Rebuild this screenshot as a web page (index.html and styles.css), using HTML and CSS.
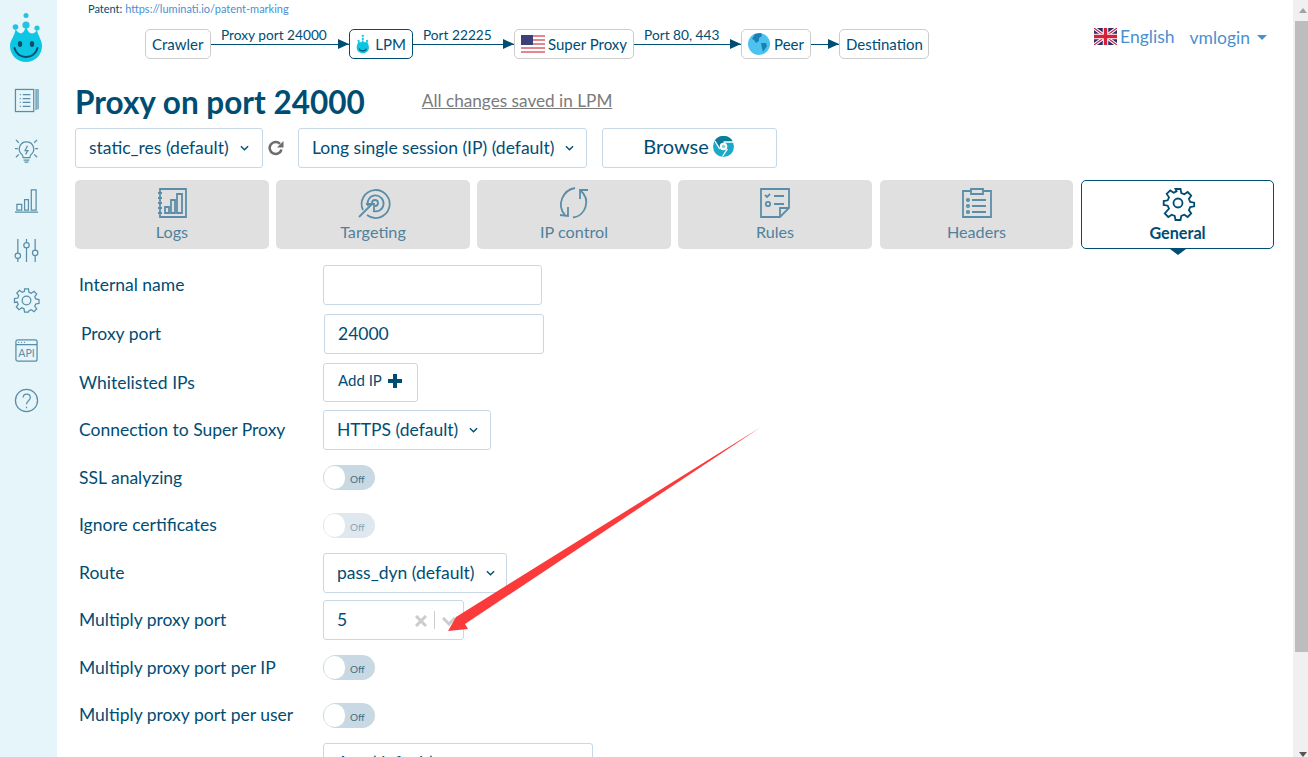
FILE: index.html
```html
<!DOCTYPE html>
<html lang="en">
<head>
    <meta charset="UTF-8">
    <title>Proxy on port 24000</title>
    <link rel="stylesheet" href="styles.css">
</head>
<body>
<div class="app">
    <nav class="sidebar">
        <svg class="logo" width="34" height="52" viewBox="0 0 34 52">
            <circle cx="16" cy="3.500" r="2.500" fill="#21c5e0"/>
            <circle cx="16" cy="13" r="3.600" fill="#21c5e0"/>
            <circle cx="5.500" cy="15" r="2.800" fill="#21c5e0"/>
            <circle cx="27" cy="16" r="2.600" fill="#21c5e0"/>
            <path d="M16 14 C18 22 23 24 27 18 C28 24 32 28 32 34 C32 43 25 50 16 50 C7 50 0 43 0 34 C0 28 5 24 5.500 17 C10 24 14 22 16 14Z" fill="#0dc6e4"/>
            <ellipse cx="10" cy="32" rx="2.200" ry="3" fill="#0a4d6e"/>
            <ellipse cx="22" cy="32" rx="2.200" ry="3" fill="#0a4d6e"/>
            <path d="M4.500 36 C7 48 25 48 27.500 36" fill="none" stroke="#0a4d6e" stroke-width="2" stroke-linecap="round"/>
        </svg>
        <svg class="nav-icon" viewBox="0 0 26 26"><rect x="1.500" y="1.500" width="19" height="23"/><path d="M23 1v22M25 1v21M6 7h1M9 7h8M6 11h1M9 11h8M6 15h1M9 15h8M6 19h1M9 19h8"/></svg>
        <svg class="nav-icon" viewBox="0 0 26 26"><path d="M13 4a7.500 7.500 0 0 0-4.500 13.500c1 1 1 2 1 3h7c0-1 0-2 1-3A7.500 7.500 0 0 0 13 4zM10 23h6M11 25h4M14 8l-2.500 5h3L12 17M1 11h3M22 11h3M2 2l3 3M24 2l-3 3M2 20l3-3M24 20l-3-3"/></svg>
        <svg class="nav-icon" viewBox="0 0 26 26"><path d="M1 25h24M3 23v-6h5v6zM11 23V12h4v11zM18 23V2h5v21z"/></svg>
        <svg class="nav-icon" viewBox="0 0 26 26"><path d="M4 1v15M4 21v4M13 1v4M13 10v15M22 1v12M22 18v7"/><circle cx="4" cy="18.500" r="2.800"/><circle cx="13" cy="7.500" r="2.800"/><circle cx="22" cy="15.500" r="2.800"/></svg>
        <svg class="nav-icon" viewBox="0 0 26 26"><circle cx="13" cy="13" r="4.500"/><path d="M11 1h4l.6 3.400 2.400 1 2.800-2 2.800 2.800-2 2.800 1 2.400 3.400.6v4l-3.400.6-1 2.400 2 2.800-2.800 2.800-2.800-2-2.400 1L15 25h-4l-.6-3.400-2.400-1-2.800 2-2.800-2.800 2-2.800-1-2.400L.5 15v-4l3.400-.6 1-2.400-2-2.800 2.800-2.800 2.800 2 2.400-1z"/></svg>
        <svg class="nav-icon" viewBox="0 0 26 26"><rect x="2" y="2" width="22" height="22" rx="2"/><path d="M2 7h22M4.500 4.500h1M7.500 4.500h1M10.500 4.500h1"/><text x="13" y="20" class="api-text">API</text></svg>
        <svg class="nav-icon" viewBox="0 0 26 26"><circle cx="13" cy="13" r="11.500"/><path d="M9.500 10c0-5 7.500-5 7.500 0 0 3.500-4 3-4 7M13 19.500v1.500"/></svg>
    </nav>

    <main class="page">
        <div class="top">
            <div class="top-left">
                <div class="patent">Patent: <a href="#">https://luminati.io/patent-marking</a></div>
                <div class="flow">
                    <span class="node node-crawler">Crawler</span>
                    <span class="link wide-a"><em>Proxy port 24000</em></span>
                    <span class="node node-active">
                        <svg width="15" height="20" viewBox="0 0 34 52"><circle cx="16" cy="5" r="3" fill="#21c5e0"/><circle cx="16" cy="13" r="3" fill="#21c5e0"/><circle cx="5" cy="18" r="3" fill="#21c5e0"/><circle cx="27" cy="18" r="3" fill="#21c5e0"/><path d="M16 14 C18 22 22 24 27 19 C29 24 32 29 32 35 C32 44 25 50 16 50 C7 50 0 44 0 35 C0 29 3 24 5 19 C10 24 14 22 16 14Z" fill="#0fc4e2"/><path d="M7 38 C9 46 23 46 25 38" fill="none" stroke="#0a4d6e" stroke-width="3"/></svg>
                        LPM
                    </span>
                    <span class="link wide-b"><em>Port 22225</em></span>
                    <span class="node node-flag">
                        <svg width="24" height="18" viewBox="0 0 24 18">
                            <rect width="24" height="18" fill="#fff"/>
                            <path d="M0 1h24M0 5h24M0 9h24M0 13h24M0 17h24" stroke="#d9606a" stroke-width="1.400"/>
                            <rect width="12" height="10" fill="#3c3f78"/>
                        </svg>
                        Super Proxy
                    </span>
                    <span class="link wide-c"><em>Port 80, 443</em></span>
                    <span class="node node-peer">
                        <svg width="22" height="22" viewBox="0 0 22 22">
                            <circle cx="11" cy="11" r="11" fill="#4cc3ee"/>
                            <path d="M7 1l6-1 1 3-3 2 0 3-3 2-2-3-2-1zM13 10l5 0 1 3-4 6-1-4z" fill="#1b80b5"/>
                        </svg>
                        Peer
                    </span>
                    <span class="link wide-d"></span>
                    <span class="node node-dest">Destination</span>
                </div>
            </div>
            <div class="top-right">
                <svg width="23" height="17" viewBox="0 0 23 17">
                    <rect width="23" height="17" fill="#27306b"/>
                    <path d="M0 0l23 17M23 0L0 17" stroke="#fff" stroke-width="3.400"/>
                    <path d="M0 0l23 17M23 0L0 17" stroke="#d3203c" stroke-width="1.200"/>
                    <path d="M11.500 0v17M0 8.500h23" stroke="#fff" stroke-width="5.500"/>
                    <path d="M11.500 0v17M0 8.500h23" stroke="#d3203c" stroke-width="3.400"/>
                </svg>
                <span class="lang">English</span>
                <span class="user">vmlogin</span>
                <span class="caret"></span>
            </div>
        </div>

        <div class="title-row">
            <h1>Proxy on port 24000</h1>
            <a class="saved" href="#">All changes saved in LPM</a>
        </div>

        <div class="presets">
            <div class="select select-preset">static_res (default)<svg class="chev" viewBox="0 0 10 6"><path d="M1 1l4 4 4-4"/></svg></div>
            <svg class="refresh" width="16" height="16" viewBox="0 0 16 16"><path d="M13.500 9.500A6 6 0 1 1 12 3.800" fill="none" stroke="#6d6d6d" stroke-width="2.600"/><path d="M15.500 1v6.500H9z" fill="#6d6d6d"/></svg>
            <div class="select select-session">Long single session (IP) (default)<svg class="chev" viewBox="0 0 10 6"><path d="M1 1l4 4 4-4"/></svg></div>
            <div class="browse">Browse
                <svg width="21" height="21" viewBox="0 0 21 21">
                    <circle cx="10.500" cy="10.500" r="10.500" fill="#18aac6"/>
                    <path d="M1.500 5A10.500 10.500 0 0 1 20 6H10.500L6 13z" fill="#0a7d99"/>
                    <path d="M10.500 6H20M6.600 12.800L2 5M14.400 12.800L9.500 20.500" stroke="#fff" stroke-width="1.300"/>
                    <circle cx="10.500" cy="10.500" r="3.800" fill="#fff"/>
                    <circle cx="10.500" cy="10.500" r="1.800" fill="#8ad3e2"/>
                </svg>
            </div>
        </div>

        <div class="tabs">
            <div class="tab">
                <svg class="tab-icon" viewBox="0 0 30 30"><path d="M3 1h26v28H3zM1 5h4M1 10h4M1 15h4M1 20h4M1 25h4M8 25v-6h4v6zM14 25V12h4v13zM20 25V6h5v19z"/></svg>
                <span>Logs</span>
            </div>
            <div class="tab">
                <svg class="tab-icon" viewBox="0 0 30 30"><path d="M5 22A14 14 0 1 1 9 27M10 18A8 8 0 1 1 15 23M14 15A3 3 0 1 1 17 18M1 29l13-13M8 16l8 0 0 7"/></svg>
                <span>Targeting</span>
            </div>
            <div class="tab">
                <svg class="tab-icon" viewBox="0 0 30 30"><path d="M16 0C4 2-3 17 6 27M1 27l8 1v-9M14 29.500C26 28 33 12 21 2M29 2h-8v9"/></svg>
                <span>IP control</span>
            </div>
            <div class="tab">
                <svg class="tab-icon" viewBox="0 0 30 30"><path d="M20 29H1V1h28v19zM29 20h-9v9M5 7l2 2 3-3M14 8h10M14 16h10"/><circle cx="8" cy="16" r="2.200"/></svg>
                <span>Rules</span>
            </div>
            <div class="tab">
                <svg class="tab-icon" viewBox="0 0 30 30"><path d="M9 3H1v26h28V3h-8M9 1h12v5H9zM10 12h14M10 18h14M10 24h14"/><circle cx="6" cy="12" r="1.200"/><circle cx="6" cy="18" r="1.200"/><circle cx="6" cy="24" r="1.200"/></svg>
                <span>Headers</span>
            </div>
            <div class="tab tab-active">
                <svg class="tab-icon" viewBox="0 0 30 30"><circle cx="15" cy="15" r="4.500"/><path d="M12.500 1h5l.8 4 3 1.300 3.400-2.300 3.500 3.500-2.300 3.400 1.300 3 4 .8v3.600l-4 .8-1.300 3 2.300 3.400-3.500 3.500-3.400-2.300-3 1.300-.8 4h-5l-.8-4-3-1.300-3.400 2.300-3.500-3.500L6 20.700l-1.300-3-4-.8v-3.800l4-.8 1.300-3-2.300-3.400 3.500-3.500 3.400 2.300 3-1.300z"/></svg>
                <span>General</span>
            </div>
        </div>

        <div class="form">
            <div class="row row-name">
                <label>Internal name</label>
                <div class="input input-name"></div>
            </div>
            <div class="row row-port">
                <label>Proxy port</label>
                <div class="input input-port">24000</div>
            </div>
            <div class="row row-ips">
                <label>Whitelisted IPs</label>
                <div class="add-ip">Add IP
                    <svg width="14" height="14" viewBox="0 0 14 14"><path d="M5 0h4v5h5v4H9v5H5V9H0V5h5z" fill="#004d74"/></svg>
                </div>
            </div>
            <div class="row row-conn">
                <label>Connection to Super Proxy</label>
                <div class="select select-conn">HTTPS (default)<svg class="chev" viewBox="0 0 10 6"><path d="M1 1l4 4 4-4"/></svg></div>
            </div>
            <div class="row row-toggle">
                <label>SSL analyzing</label>
                <div class="toggle"><i></i><b>Off</b></div>
            </div>
            <div class="row row-toggle">
                <label>Ignore certificates</label>
                <div class="toggle toggle-disabled"><i></i><b>Off</b></div>
            </div>
            <div class="row row-route">
                <label>Route</label>
                <div class="select select-route">pass_dyn (default)<svg class="chev" viewBox="0 0 10 6"><path d="M1 1l4 4 4-4"/></svg></div>
            </div>
            <div class="row row-multi">
                <label>Multiply proxy port</label>
                <div class="combo">
                    <span>5</span>
                    <svg class="combo-x" width="12" height="12" viewBox="0 0 12 12"><path d="M1 1l10 10M11 1L1 11"/></svg>
                    <s></s>
                    <svg class="combo-chev" width="14" height="9" viewBox="0 0 14 9"><path d="M1 1l6 6 6-6"/></svg>
                </div>
            </div>
            <div class="row row-toggle">
                <label>Multiply proxy port per IP</label>
                <div class="toggle"><i></i><b>Off</b></div>
            </div>
            <div class="row row-toggle">
                <label>Multiply proxy port per user</label>
                <div class="toggle"><i></i><b>Off</b></div>
            </div>
            <div class="row row-iface">
                <label>Interface</label>
                <div class="select select-iface">Any (default)</div>
            </div>
        </div>
    </main>

    <div class="scrollbar">
        <div class="scroll-up"></div>
        <div class="scroll-thumb"></div>
        <div class="scroll-down"></div>
    </div>

    <!-- annotation drawn on top of the screenshot -->
    <svg class="arrow" width="314" height="205" viewBox="0 0 314 205">
        <polygon points="313,0 8,190 0,204 20,202 17,197" fill="#fb3b3b"/>
    </svg>
</div>
</body>
</html>
```

FILE: styles.css
```css
* {
    box-sizing: border-box;
}
html, body {
    margin: 0;
    padding: 0;
    height: 100%;
    overflow: hidden;
}
body {
    font-family: Lato, "Open Sans", sans-serif;
    font-size: 17.500px;
    color: #004d74;
    background-color: #fff;
}
.app {
    position: relative;
    display: flex;
    height: 757px;
    overflow: hidden;
}

/* left nav */
.sidebar {
    width: 57px;
    flex: none;
    background-color: #e5f5fa;
    display: flex;
    flex-direction: column;
    align-items: center;
    padding: 12px 5px 0 0;
}
.logo {
    display: block;
    margin: 0 0 24px 2px;
}
.nav-icon {
    width: 25px;
    height: 25px;
    margin-bottom: 25px;
    fill: none;
    stroke: #5a8ea8;
    stroke-width: 1.300;
    overflow: visible;
}
.api-text {
    font-family: Lato, sans-serif;
    font-size: 11px;
    text-anchor: middle;
    fill: #5a8ea8;
    stroke: none;
}

/* main column */
.page {
    flex: 1;
    min-width: 0;
    padding-left: 18px;
    padding-right: 19px;
}
.top {
    display: flex;
    justify-content: space-between;
    height: 71px;
}
.patent {
    font-size: 11px;
    line-height: 14px;
    padding: 2px 0 0 13px;
}
.patent a {
    color: #4a90d0;
    text-decoration: none;
}
.flow {
    display: flex;
    align-items: center;
    margin: 13px 0 0 70px;
    font-size: 15px;
}
.node {
    display: flex;
    align-items: center;
    gap: 5px;
    height: 30px;
    padding: 0 6px;
    border: 1px solid #ccc;
    border-radius: 5px;
    white-space: nowrap;
}
.node-crawler {
    width: 66px;
}
.node-active {
    width: 64px;
    border-color: #004d74;
}
.node-flag {
    gap: 3px;
}
.node-peer {
    gap: 4px;
}
.node-dest {
    width: 90px;
    padding: 0 0 0 6px;
}
.link {
    position: relative;
    height: 1px;
    background-color: #004d74;
}
.link::after {
    content: "";
    position: absolute;
    right: 0;
    top: -5px;
    border-left: 11px solid #004d74;
    border-top: 5.500px solid transparent;
    border-bottom: 5.500px solid transparent;
}
.link em {
    position: absolute;
    left: 10px;
    bottom: 1px;
    font-style: normal;
    font-size: 13.700px;
    line-height: 18px;
    white-space: nowrap;
}
.wide-a { width: 138px; }
.wide-b { width: 101px; }
.wide-c { width: 107px; }
.wide-d { width: 28px; }

.top-right {
    display: flex;
    align-items: center;
    height: 24px;
    margin-top: 24px;
    padding-right: 7px;
    color: #4a90d0;
}
.lang {
    margin-left: 3px;
}
.user {
    margin-left: 15px;
    margin-top: 2px;
}
.caret {
    margin: 3px 0 0 7px;
    border-top: 5px solid #4a90d0;
    border-left: 5px solid transparent;
    border-right: 5px solid transparent;
}

.title-row {
    display: flex;
    align-items: center;
    height: 40px;
    margin-top: 11px;
}
h1 {
    margin: 0;
    font-size: 31.500px;
    font-weight: 700;
    line-height: 40px;
    color: #004d74;
}
.saved {
    margin: 0 0 3px 57px;
    color: #7b7b7b;
    font-size: 17.200px;
}

.presets {
    display: flex;
    align-items: center;
    margin-top: 6px;
    height: 40px;
}
.select, .input, .browse, .add-ip, .combo {
    display: flex;
    align-items: center;
    height: 40px;
    border: 1px solid #c8d8e4;
    border-radius: 3px;
    background-color: #fff;
    white-space: nowrap;
}
.select, .input {
    padding: 0 0 2px 13px;
}
.chev {
    width: 9px;
    height: 6px;
    margin: 2px 0 0 11px;
    fill: none;
    stroke: #004d74;
    stroke-width: 1.500;
    flex: none;
}
.select-preset { width: 188px; }
.refresh { margin: 0 14px 0 5px; flex: none; }
.select-session { width: 289px; }
.browse {
    width: 175px;
    margin-left: 15px;
    justify-content: center;
    gap: 4px;
    font-size: 20px;
    padding: 0 2px 4px 0;
}

.tabs {
    display: flex;
    gap: 7px;
    margin-top: 12px;
}
.tab {
    position: relative;
    flex: none;
    width: 194px;
    height: 69px;
    background-color: #e0e0e0;
    border-radius: 5px;
    color: #50819c;
    font-size: 16.200px;
    display: flex;
    flex-direction: column;
    align-items: center;
    padding-top: 8px;
}
.tab:nth-child(5) {
    width: 193px;
    margin-left: 1px;
}
.tab-icon {
    width: 30px;
    height: 30px;
    fill: none;
    stroke: #5a8ea8;
    stroke-width: 1.800;
    overflow: visible;
}
.tab span {
    margin-top: 4px;
    line-height: 20px;
}
.tab-active {
    width: 193px;
    background-color: #fff;
    border: 1px solid #004d74;
    padding-top: 7px;
    color: #004d74;
    font-weight: 700;
    margin-left: 1px;
}
.tab-active span {
    margin-top: 5px;
}
.tab-active .tab-icon {
    stroke: #004d74;
}
.tab-active::after {
    content: "";
    position: absolute;
    left: 50%;
    margin-left: -8px;
    bottom: -7px;
    border-top: 6px solid #004d74;
    border-left: 8px solid transparent;
    border-right: 8px solid transparent;
}

/* settings rows */
.form {
    margin-top: 16px;
}
.row {
    display: flex;
    align-items: center;
    margin-left: 4px;
}
.row label {
    width: 244px;
    flex: none;
}
.row-name label,
.row-port label,
.row-conn label,
.row-route label,
.row-multi label,
.row-toggle + .row-toggle label {
    padding-bottom: 2px;
}
.row-name { height: 40px; }
.row-port { height: 40px; margin-top: 9px; margin-left: 6px; }
.row-port label { width: 243px; }
.row-ips { height: 39px; margin-top: 9px; }
.row-conn { height: 40px; margin-top: 8px; }
.row-toggle { height: 25px; }
.row-conn + .row-toggle { margin-top: 15px; }
.row-toggle + .row-toggle { margin-top: 23px; }
.row-route { height: 40px; margin-top: 15px; }
.row-multi { height: 40px; margin-top: 7px; }
.row-multi + .row-toggle { margin-top: 15px; }
.row-iface { height: 40px; margin-top: 15px; }
.input-name { width: 219px; }
.input-port { width: 220px; }
.add-ip {
    width: 95px;
    height: 39px;
    padding: 0 0 5px 14px;
    gap: 6px;
    font-size: 15px;
}
.add-ip svg {
    margin-top: 1px;
}
.select-conn { width: 168px; }
.select-route { width: 184px; }
.select-iface { width: 270px; }
.combo {
    position: relative;
    width: 141px;
    padding: 0 0 2px 13px;
}
.combo-x {
    position: absolute;
    left: 91px;
    top: 14px;
    fill: none;
    stroke: #ccc;
    stroke-width: 3;
}
.combo s {
    position: absolute;
    left: 110px;
    top: 10px;
    width: 1px;
    height: 18px;
    background-color: #ccc;
}
.combo-chev {
    position: absolute;
    left: 118px;
    top: 16px;
    fill: none;
    stroke: #ccc;
    stroke-width: 3;
}
.toggle {
    position: relative;
    width: 52px;
    height: 25px;
    border-radius: 13px;
    background-color: #c9d9e3;
}
.toggle i {
    position: absolute;
    left: 1px;
    top: 1px;
    width: 21px;
    height: 23px;
    border-radius: 12px;
    background-color: #fff;
}
.toggle b {
    position: absolute;
    left: 27px;
    top: 7px;
    font-size: 10px;
    font-weight: 400;
    line-height: 15px;
    color: #3d6e88;
}
.toggle-disabled {
    background-color: #dfe8ee;
}
.toggle-disabled b {
    color: #89a6b6;
}

/* fake window scrollbar */
.scrollbar {
    position: relative;
    width: 15px;
    flex: none;
    padding-left: 2px;
    background-color: #f0f0f0;
}
.scroll-up {
    height: 21px;
    position: relative;
}
.scroll-up::after {
    content: "";
    position: absolute;
    left: 4px;
    top: 8px;
    border-bottom: 5px solid #a3a3a3;
    border-left: 4px solid transparent;
    border-right: 4px solid transparent;
}
.scroll-thumb {
    height: 631px;
    background-color: #bdbdbd;
}
.scroll-down {
    position: absolute;
    left: 6px;
    bottom: 0;
    border-top: 5px solid #555;
    border-left: 4px solid transparent;
    border-right: 4px solid transparent;
}

.arrow {
    position: absolute;
    left: 448px;
    top: 427px;
}
```
